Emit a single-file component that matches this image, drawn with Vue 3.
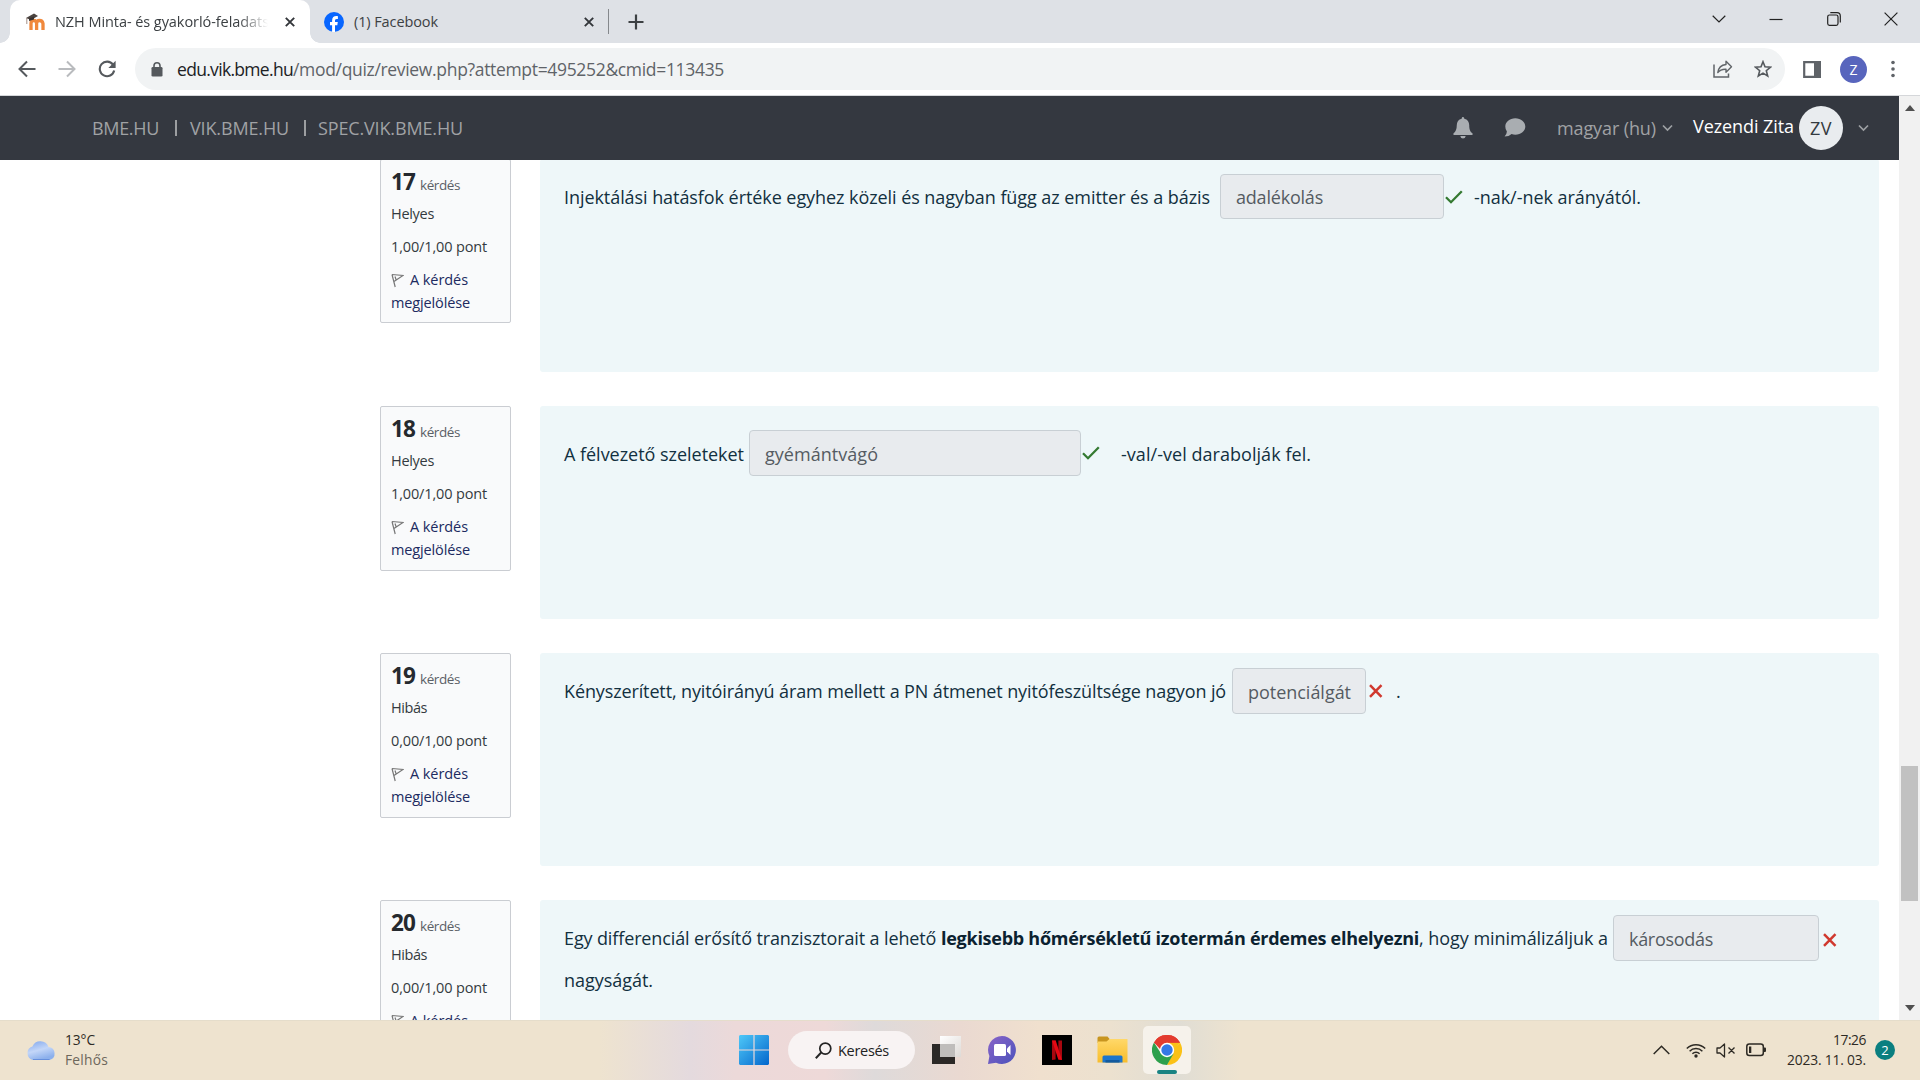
<script setup>
// Spreads or tightens the letters of a label so that it fills the given width.
const vFit = {
  mounted(el, { value }) {
    const natural = el.getBoundingClientRect().width
    const count = [...el.textContent.trim()].length
    el.style.letterSpacing = `${(value - natural) / count}px`
  },
}

const questions = [
  {
    no: 17, state: 'Helyes', stateW: 43, mark: '1,00/1,00 pont', ok: true, offset: 14, after: 11, more: true,
    lead: [{ t: 'Injektálási hatásfok értéke egyhez közeli és nagyban függ az emitter és a bázis', w: 646 }],
    gap: 10, answer: 'adalékolás', answerW: 87, inputW: 224, iconGap: 1, tail: '-nak/-nek arányától.', tailW: 167,
  },
  {
    no: 18, state: 'Helyes', stateW: 43, mark: '1,00/1,00 pont', ok: true, offset: 24, after: 21, more: true,
    lead: [{ t: 'A félvezető szeleteket', w: 180 }],
    gap: 5, answer: 'gyémántvágó', answerW: 113, inputW: 332, iconGap: 1, tail: '-val/-vel darabolják fel.', tailW: 190,
  },
  {
    no: 19, state: 'Hibás', stateW: 36, mark: '0,00/1,00 pont', ok: false, offset: 15, after: 11, more: true, raise: true,
    lead: [{ t: 'Kényszerített, nyitóirányú áram mellett a PN átmenet nyitófeszültsége nagyon jó', w: 662 }],
    gap: 6, answer: 'potenciálgát', answerW: 103, inputW: 134, iconGap: 1, tail: '.', tailW: 5,
  },
  {
    no: 20, state: 'Hibás', stateW: 36, mark: '0,00/1,00 pont', ok: false, offset: 15, after: 12, raise: true,
    lead: [
      { t: 'Egy differenciál erősítő tranzisztorait a lehető ', w: 377 },
      { t: 'legkisebb hőmérsékletű izotermán érdemes elhelyezni', w: 478, bold: true },
      { t: ', hogy minimálizáljuk a', w: 189 },
    ],
    gap: 5, answer: 'károsodás', answerW: 84, inputW: 206, iconGap: 2, rest: 'nagyságát.', restW: 89,
  },
]
</script>

<template>
  <div class="screen">
    <header class="tabs">
      <div class="tab active">
        <svg class="moodle" width="20" height="18" viewBox="0 0 20 18">
          <path d="M5 17V10.5Q5 7.5 7.7 7.5T10.6 10.5V17M10.6 10.5Q10.6 7.5 13.5 7.5T17 10.5V17" fill="none" stroke="#f0883c" stroke-width="3.3" />
          <path d="M0 5 8 .5 12 3 5 7Z" fill="#4a4340" />
          <path d="M3 5.5V8L8 6.5V3.5Z" fill="#383230" /><path d="M.8 5v6" stroke="#8b7468" stroke-width=".8" />
        </svg>
        <span class="title fade"><span v-fit="214" class="fit">NZH Minta- és gyakorló-feladats</span></span>
        <svg class="x" width="10" height="10" viewBox="0 0 10 10"><path d="M.8.8 9.2 9.2M9.2.8.8 9.2" stroke="#33363a" stroke-width="1.9" /></svg>
      </div>
      <div class="tab">
        <svg class="fb" width="20" height="20" viewBox="0 0 20 20">
          <circle cx="10" cy="10" r="10" fill="#0866ff" />
          <path d="M8.1 20V13.2H6V10.1H8.1V8.5C8.1 5.2 9.8 4 12.3 4c.7 0 1.2.1 1.6.2V7h-1.2C11.4 7 11 7.7 11 8.8v1.3h2.8l-.5 3.1H11V20Z" fill="#fff" />
        </svg>
        <span class="title"><span v-fit="84" class="fit">(1) Facebook</span></span>
        <svg class="x" width="10" height="10" viewBox="0 0 10 10"><path d="M.8.8 9.2 9.2M9.2.8.8 9.2" stroke="#33363a" stroke-width="1.9" /></svg>
      </div>
      <i class="tabsep"></i>
      <svg class="plus" width="16" height="16" viewBox="0 0 16 16"><path d="M8 .5v15M.5 8h15" stroke="#3c4043" stroke-width="2.2" /></svg>
      <div class="winctl">
        <svg width="14" height="14" viewBox="0 0 14 14"><path d="M.7 3.8 7 10 13.3 3.8" /></svg>
        <svg width="14" height="14" viewBox="0 0 14 14"><path d="M.5 7.5h13" /></svg>
        <svg width="14" height="14" viewBox="0 0 14 14"><rect x=".7" y="3" width="10.3" height="10.3" rx="1.8" /><path d="M3.3.7H10q3.3 0 3.3 3.3v6.6" /></svg>
        <svg width="14" height="14" viewBox="0 0 14 14"><path d="M.6.6 13.4 13.4M13.4.6.6 13.4" /></svg>
      </div>
    </header>

    <div class="toolbar">
      <svg class="back" width="18" height="18" viewBox="0 0 18 18"><path d="M17.5 9H2M9 1.5 1.5 9 9 16.5" fill="none" stroke="#55595d" stroke-width="2" /></svg>
      <svg class="fwd" width="18" height="18" viewBox="0 0 18 18"><path d="M.5 9H16M9 1.5 16.5 9 9 16.5" fill="none" stroke="#b9bbbe" stroke-width="2" /></svg>
      <svg class="reload" width="18" height="18" viewBox="0 0 18 18"><path d="M15 4.6A7.3 7.3 0 1 0 16.2 10.6" fill="none" stroke="#55595d" stroke-width="2.1" /><path d="M17.6.8V8H10.4Z" fill="#55595d" /></svg>
      <div class="omnibox">
        <svg class="lock" width="12" height="15" viewBox="0 0 12 15"><rect x=".5" y="5" width="11" height="9.5" rx="1.3" fill="#55595d" /><path d="M3 6V3.8a3 3 0 0 1 6 0V6" fill="none" stroke="#55595d" stroke-width="1.6" /></svg>
        <span class="url"><span v-fit="116" class="fit host">edu.vik.bme.hu</span><span v-fit="431" class="fit">/mod/quiz/review.php?attempt=495252&amp;cmid=113435</span></span>
        <svg class="share" width="20" height="18" viewBox="0 0 20 18"><path d="M1 4.5V17H15.5V13.5" fill="none" stroke="#606468" stroke-width="1.5" /><path d="M13 1.2 18.5 6.8 13 12.2V9.2C9.5 9 6.8 10 4.8 12.6 5.4 8 8 5 13 4.5Z" fill="none" stroke="#606468" stroke-width="1.4" stroke-linejoin="round" /></svg>
        <svg class="star" width="18" height="18" viewBox="0 0 18 18"><path d="M9 1.7 11 6.8 16.5 7.2 12.3 10.7 13.7 16 9 13.1 4.3 16 5.7 10.7 1.5 7.2 7 6.8Z" fill="none" stroke="#55595d" stroke-width="1.6" /></svg>
      </div>
      <svg class="panel" width="18" height="17" viewBox="0 0 18 17"><path d="M1.2 1.2H16.8V15.8H1.2Z" fill="none" stroke="#5f6368" stroke-width="2.2" /><path d="M11 0h7v17h-7z" fill="#5f6368" /></svg>
      <span class="profile">Z</span>
      <svg class="dots" width="4" height="18" viewBox="0 0 4 18"><g fill="#5f6368"><circle cx="2" cy="2.5" r="1.8" /><circle cx="2" cy="9" r="1.8" /><circle cx="2" cy="15.5" r="1.8" /></g></svg>
    </div>

    <div class="page">
      <div class="view">
        <nav class="nav">
          <span v-fit="67" class="fit">BME.HU</span><i class="bar b1"></i>
          <span v-fit="99" class="fit">VIK.BME.HU</span><i class="bar b2"></i>
          <span v-fit="145" class="fit">SPEC.VIK.BME.HU</span>
          <div class="user">
            <svg class="bell" width="20" height="22" viewBox="0 0 20 22"><path d="M10 0q1.3 0 1.3 1.7C14.6 2.4 16.2 5 16.2 8c0 5 1.3 7 3.3 8.3V18H.5V16.300Q3.800 14 3.800 8C3.800 5 5.400 2.400 8.700 1.700 8.700.5 9.200 0 10 0ZM7.300 19h5.400Q12.300 21.500 10 21.500T7.300 19Z" fill="#a9adb1" /></svg>
            <svg class="chat" width="22" height="19" viewBox="0 0 22 19"><path d="M11.300.3C17 .3 21.300 4 21.300 8.500S17 16.700 11.300 16.700q-2 0-3.700-.7Q5 18.600.6 18.600 2.700 16.500 2.900 13.500 1.300 11.500 1.300 8.500C1.300 4 5.600.3 11.300.3Z" fill="#a9adb1" /></svg>
            <span v-fit="99" class="fit">magyar (hu)</span>
            <svg class="c1" width="11" height="8" viewBox="0 0 11 8"><path d="M1 1.500 5.500 6 10 1.500" fill="none" stroke="#9da0a3" stroke-width="1.700" /></svg>
            <span v-fit="101" class="fit name">Vezendi Zita</span>
            <span class="initials"><span v-fit="22" class="fit">ZV</span></span>
            <svg class="c2" width="11" height="8" viewBox="0 0 11 8"><path d="M1 1.500 5.500 6 10 1.500" fill="none" stroke="#9da0a3" stroke-width="1.700" /></svg>
          </div>
        </nav>
        <main class="list">
          <section v-for="q in questions" :key="q.no" class="question">
            <aside class="info">
              <div class="no"><b v-fit="24" class="fit">{{ q.no }}</b><span v-fit="40" class="fit small">kérdés</span></div>
              <div class="row state"><span v-fit="q.stateW" class="fit">{{ q.state }}</span></div>
              <div class="row mark"><span v-fit="96" class="fit">{{ q.mark }}</span></div>
              <div class="row flag">
                <svg width="13" height="15" viewBox="0 0 13 15"><path d="M1 1.500 4.200 14M1 1.500 12 2.500 3 8.500M4 3.500 5 6.500" fill="none" stroke="#777" stroke-width="1.200" /></svg>
                <a v-fit="58" class="fit">A kérdés</a>
              </div>
              <div v-if="q.more" class="row flag2"><a v-fit="79" class="fit">megjelölése</a></div>
            </aside>
            <div class="content">
              <div class="line" :class="{ raise: q.raise }" :style="{ marginTop: q.offset + 'px' }">
                <span v-for="p in q.lead" :key="p.t" class="cell" :class="{ bold: p.bold }" :style="{ width: p.w + 'px' }"><span v-fit="p.w" class="fit">{{ p.t }}</span></span>
                <span class="answer" :style="{ width: q.inputW + 'px', marginLeft: q.gap + 'px' }"><span v-fit="q.answerW" class="fit">{{ q.answer }}</span></span>
                <svg v-if="q.ok" class="tick" :style="{ marginLeft: q.iconGap + 'px' }" width="18" height="14" viewBox="0 0 18 14"><path d="M1 7.200 6 12.200 16.800 1.200" fill="none" stroke="#357a32" stroke-width="2.300" /></svg>
                <svg v-else class="cross" :style="{ marginLeft: q.iconGap + 'px' }" width="18" height="14" viewBox="0 0 18 14"><path d="M3 1.200 14.500 12.800M14.500 1.200 3 12.800" fill="none" stroke="#d0392f" stroke-width="2.500" /></svg>
                <span v-if="q.tail" class="cell" :style="{ marginLeft: q.after + 'px' }"><span v-fit="q.tailW" class="fit">{{ q.tail }}</span></span>
              </div>
              <div v-if="q.rest" class="rest"><span v-fit="q.restW" class="fit">{{ q.rest }}</span></div>
            </div>
          </section>
        </main>
      </div>
      <div class="scroll">
        <i class="up"></i><i class="thumb"></i><i class="down"></i>
      </div>
    </div>

    <footer class="taskbar">
      <svg class="cloud" width="32" height="21" viewBox="0 0 32 21">
        <defs><linearGradient id="cl" x1="0" y1="0" x2=".4" y2="1"><stop offset="0" stop-color="#7fa6ec" /><stop offset=".55" stop-color="#c3d6f8" /><stop offset="1" stop-color="#8cb0ec" /></linearGradient></defs>
        <path d="M8 20a7 7 0 0 1-.6-13.500A8.600 8.600 0 0 1 23.500 7 6.600 6.600 0 0 1 24.500 20Z" fill="url(#cl)" /><path d="M8 19.500H24.500" stroke="#668fdc" />
      </svg>
      <div class="weather"><span v-fit="30" class="fit">13°C</span><span v-fit="43" class="fit dim">Felhős</span></div>

      <div class="apps">
        <svg class="win" width="30" height="30" viewBox="0 0 30 30">
          <defs><linearGradient id="wi" gradientUnits="userSpaceOnUse" x1="0" y1="0" x2="30" y2="30"><stop offset="0" stop-color="#4fc8f8" /><stop offset="1" stop-color="#0366cc" /></linearGradient></defs>
          <path d="M1 0H14.400V14.400H0V1ZM15.600 0H29L30 1V14.400H15.600ZM0 15.600H14.400V30H1L0 29ZM15.600 15.600H30V29L29 30H15.600Z" fill="url(#wi)" />
        </svg>
        <div class="search">
          <svg width="17" height="17" viewBox="0 0 17 17"><circle cx="10.300" cy="6.600" r="5.500" fill="none" stroke="#242424" stroke-width="1.700" /><path d="M6.200 10.500.8 16.200" stroke="#242424" stroke-width="2" /></svg>
          <span v-fit="51" class="fit">Keresés</span>
        </div>
        <svg class="tasks" width="30" height="30" viewBox="0 0 30 30">
          <defs><linearGradient id="tv" x1="0" y1="0" x2="1" y2="1"><stop offset="0" stop-color="#fff" /><stop offset="1" stop-color="#dedad6" /></linearGradient></defs>
          <path d="M0 9H23V29H0Z" fill="#2b2826" /><path d="M8 1H29V22H8Z" fill="url(#tv)" /><path d="M8 9H23V22H8Z" fill="#bfbdbb" />
        </svg>
        <svg class="teams" width="30" height="30" viewBox="0 0 30 30">
          <defs><linearGradient id="te" x1="0" y1="0" x2="1" y2="1"><stop offset="0" stop-color="#8964c8" /><stop offset="1" stop-color="#4b52bc" /></linearGradient></defs>
          <path d="M15 1A14 14 0 1 1 9 27.700L1 29 2.400 21A14 14 0 0 1 15 1Z" fill="url(#te)" />
          <rect x="7" y="9" width="12" height="12" rx="1.500" fill="#fff" /><path d="M20 13.500 23.500 10V20L20 16.500Z" fill="#fff" />
        </svg>
        <svg class="netflix" width="30" height="30" viewBox="0 0 30 30"><path d="M0 0H30V30H0Z" fill="#000" /><path d="M10 5.500h3.600V24.500L10 25ZM16.400 5.500H20V25l-3.600-.5Z" fill="#a8070f" /><path d="M10 5.500h3.700L20 25l-3.700-.5Z" fill="#e50914" /></svg>
        <svg class="folder" width="31" height="28" viewBox="0 0 31 28">
          <defs><linearGradient id="fo" x1="0" y1="0" x2="0" y2="1"><stop offset="0" stop-color="#ffd869" /><stop offset="1" stop-color="#f8bd2c" /></linearGradient></defs>
          <path d="M.5 2Q.5.500 2 .5H10.500L13 3.500 10 7H.5Z" fill="#c8951f" /><path d="M.5 5.500H9.500L12.500 3H30.500V26.500H.5Z" fill="url(#fo)" />
          <path d="M5.500 26.500V21Q5.500 19.500 7 19.500H24Q25.500 19.500 25.500 21V26.500Z" fill="#1c75cc" /><path d="M8.500 26.500v-2.500h14v2.500" fill="#135a9e" />
        </svg>
        <div class="tile">
          <svg width="30" height="30" viewBox="0 0 30 30">
            <path d="M15 15 2 7.500A15 15 0 0 1 28 7.500Z" fill="#e33b2e" /><path d="M15 15H21.500L28 7.500A15 15 0 0 1 15 30L21 18Z" fill="#fbc116" />
            <path d="M2 7.500A15 15 0 0 0 15 30L21.500 18.700 9 18.500Z" fill="#2da04c" /><path d="M15 7.500H28L22 16 15 15Z" fill="#fbc116" /><path d="M2 7.500A15 15 0 0 1 28 7.500L28.100 7.700H15L9 15Z" fill="#e33b2e" />
            <circle cx="15" cy="15" r="7.200" fill="#fff" /><circle cx="15" cy="15" r="5.700" fill="#3478e5" />
          </svg>
          <i></i>
        </div>
      </div>

      <div class="tray">
        <svg class="t1" width="17" height="10" viewBox="0 0 17 10"><path d="M.7 9 8.500 1.200 16.300 9" fill="none" stroke="#2d2a24" stroke-width="1.500" /></svg>
        <svg class="t2" width="20" height="16" viewBox="0 0 20 16"><g fill="none" stroke="#2d2a24" stroke-width="1.500"><path d="M.8 6.500a13 13 0 0 1 18.400 0" /><path d="M3.600 9.200a9 9 0 0 1 12.800 0" /><path d="M6.400 11.800a5.100 5.100 0 0 1 7.200 0" /></g><circle cx="10" cy="14" r="1.700" fill="#2d2a24" /></svg>
        <svg class="t3" width="20" height="15" viewBox="0 0 20 15"><path d="M1 5H4L8.500 1V14L4 10H1ZM12.500 4.500 18.500 10.500M18.500 4.500 12.500 10.500" fill="none" stroke="#2d2a24" stroke-width="1.300" stroke-linejoin="round" /></svg>
        <svg class="t4" width="21" height="14" viewBox="0 0 21 14"><rect x=".8" y="1" width="16.500" height="11.500" rx="2.500" fill="none" stroke="#2d2a24" stroke-width="1.500" /><path d="M3 3.500h2.300v6.500H3zM18 4.500h1q1 0 1 1.200V8q0 1-1 1h-1z" fill="#2d2a24" /></svg>
        <div class="clock"><span v-fit="33" class="fit">17:26</span><span v-fit="79" class="fit">2023. 11. 03.</span></div>
        <span class="badge">2</span>
      </div>
    </footer>
  </div>
</template>

<style>
body { margin: 0; overflow: hidden; }
</style>

<style scoped>
* { box-sizing: border-box; }
svg { display: block; flex: none; }
.screen { width: 1920px; height: 1080px; display: flex; flex-direction: column; overflow: hidden; font-family: "Open Sans", "Noto Sans", sans-serif; background: #fff; }
.fit { display: inline-block; white-space: pre; flex: none; }

.tabs { height: 43px; flex: none; background: #dee1e6; display: flex; align-items: center; }
.tab { height: 43px; display: flex; align-items: center; font-size: 14.5px; color: #3c4043; }
.tab.active { width: 300px; margin-left: 10px; background: #fff; border-radius: 10px 10px 0 0; position: relative; }
.tab.active::before, .tab.active::after { content: ""; position: absolute; bottom: 0; width: 10px; height: 10px; }
.tab.active::before { left: -10px; background: radial-gradient(circle at 0 0, #dee1e6 9.500px, #fff 10px); }
.tab.active::after { right: -10px; background: radial-gradient(circle at 100% 0, #dee1e6 9.500px, #fff 10px); }
.moodle { margin-left: 16px; }
.title { margin-left: 10px; margin-top: -1px; }
.title.fade { margin-left: 9px; }
.fade { width: 213px; overflow: hidden; mask-image: linear-gradient(90deg, #000 86%, transparent); }
.tab.active .x { margin-left: 17px; }
.fb { margin-left: 14px; }
.tab:not(.active) .x { margin-left: 146px; }
.tabsep { width: 1px; height: 25px; background: #85888c; margin-left: 14px; }
.plus { margin-left: 19px; }
.winctl { margin: -6px 22px 0 auto; display: flex; gap: 43.300px; }
.winctl svg { fill: none; stroke: #222; stroke-width: 1.200; }

.toolbar { height: 53px; flex: none; display: flex; align-items: center; background: #fff; border-bottom: 1px solid #d5d7da; }
.back { margin-left: 18px; }
.fwd { margin-left: 22px; }
.reload { margin-left: 22px; }
.omnibox { width: 1650px; height: 42px; margin-left: 19px; border-radius: 21px; background: #f1f3f4; display: flex; align-items: center; }
.lock { margin-left: 16px; }
.url { display: flex; margin-left: 14px; font-size: 17.500px; color: #5f6368; }
.host { color: #202124; }
.share { margin-left: 989px; }
.star { margin-left: 21px; }
.panel { margin-left: 18px; }
.profile { width: 27px; height: 27px; margin-left: 19px; border-radius: 50%; background: #5865bd; color: #fff; font-size: 14px; line-height: 27px; text-align: center; }
.dots { margin-left: 24px; }

.page { flex: 1; min-height: 0; display: flex; }
.view { width: 1899px; display: flex; flex-direction: column; overflow: hidden; }
.nav { height: 64px; flex: none; background: #343840; display: flex; align-items: center; padding-left: 92px; color: #a0a2a5; font-size: 18px; z-index: 1; }
.bar { width: 2px; height: 16px; background: #9c9ea1; }
.b1 { margin: 0 13px 0 16px; }
.b2 { margin: 0 12px 0 15px; }
.user { display: flex; align-items: center; margin-left: auto; padding-right: 30px; }
.bell { margin-top: -1px; }
.chat { margin: -1px 31px 0; }
.c1 { margin-left: 6px; }
.name { color: #fff; margin-left: 20px; margin-top: -4px; }
.initials { width: 44px; height: 44px; margin-left: 5px; border-radius: 50%; background: #e9ecef; color: #343a40; display: flex; align-items: center; justify-content: center; }
.c2 { margin-left: 15px; }

.list { padding-left: 380px; margin-top: -1px; height: 861px; flex: none; overflow: hidden; }
.question { display: flex; align-items: flex-start; height: 247px; }
.info { width: 131px; height: 165px; flex: none; border: 1px solid #cacdd2; border-radius: 2px; background: #f9fafb; padding-left: 10px; font-size: 14.500px; color: #343a40; display: flex; flex-direction: column; }
.question:first-child .info { height: 164px; }
.no { display: flex; align-items: baseline; height: 30px; margin-top: 7px; line-height: 30px; }
.no b { font-size: 22.500px; color: #25292e; }
.small { margin-left: 5px; font-size: 13.500px; color: #5b6066; }
.row { height: 22px; line-height: 22px; display: flex; align-items: center; }
.state { margin-top: 6px; }
.mark { margin-top: 11px; }
.flag { margin-top: 11px; }
.flag svg { margin-right: 6px; }
.flag2 { margin-top: 1px; }
.info a { color: #202a60; }
.content { width: 1339px; height: 213px; margin-left: 29px; border-radius: 3px; background: #eef7f9; padding-left: 24px; font-size: 18px; color: #12303f; overflow: hidden; display: flex; flex-direction: column; }
.line { display: flex; align-items: center; height: 46px; flex: none; }
.cell { padding-top: 1px; flex: none; white-space: nowrap; }
.raise .cell { padding-top: 0; margin-top: -1px; }
.bold { font-weight: 700; color: #0b2230; }
.answer { height: 46px; flex: none; border: 1px solid #c8cfd4; border-radius: 4px; background: #e8ebee; color: #555b62; padding: 1px 0 0 15px; display: flex; align-items: center; }
.rest { margin-top: 7px; }
.question:first-child .line { padding-top: 1px; }
.question:first-child .answer { height: 45px; }
.question:last-child .cross { margin-top: 4px; }

.scroll { width: 21px; background: #f1f1f1; display: flex; flex-direction: column; align-items: center; }
.up { border: 5px solid transparent; border-top: 0; border-bottom: 6px solid #505050; margin-top: 9px; }
.thumb { width: 17px; height: 135px; background: #c1c1c1; margin-top: 655px; }
.down { border: 5px solid transparent; border-bottom: 0; border-top: 6px solid #505050; margin-top: 104px; }

.taskbar { height: 60px; flex: none; display: flex; align-items: center; border-top: 1px solid #e5ddcb; padding-bottom: 1px; color: #2d2a24; font-size: 13.800px; background: linear-gradient(90deg, #eee3cf 0, #eee3cf 600px, #e4dade 690px, #ecd9d9 735px, #eed9d8 825px, #dedada 875px, #ead9d1 960px, #f0e0ce 1040px, #ece1cf 1110px, #e0ddd4 1180px, #eee3cf 1240px); }
.cloud { margin-left: 25px; }
.weather { margin-left: 8px; width: 60px; display: flex; flex-direction: column; align-items: flex-start; line-height: 20px; }
.dim { color: #6d675c; }
.apps { display: flex; align-items: center; margin-left: 614px; height: 58px; }
.search { width: 127px; height: 38px; margin-left: 19px; border-radius: 19px; background: #f8f3f3; display: flex; align-items: center; padding-left: 27px; gap: 6px; color: #222; font-size: 14.500px; }
.tasks { margin-left: 17px; }
.teams { margin-left: 25px; }
.netflix { margin-left: 25px; }
.folder { margin-left: 25px; }
.tile { width: 48px; height: 48px; margin-left: 15px; border-radius: 5px; background: #f6f2eb; display: flex; flex-direction: column; align-items: center; padding-top: 9px; }
.tile i { width: 20px; height: 4px; border-radius: 2px; background: #198383; margin-top: 5px; }
.tray { display: flex; align-items: center; margin-left: auto; padding-right: 25px; }
.t2 { margin-left: 16px; }
.t3 { margin-left: 10px; }
.t4 { margin-left: 10px; }
.clock { width: 99px; display: flex; flex-direction: column; align-items: flex-end; line-height: 20px; }
.badge { width: 20px; height: 20px; margin-left: 9px; border-radius: 50%; background: #0a7f80; color: #fff; font-size: 13px; line-height: 20px; text-align: center; }
</style>
